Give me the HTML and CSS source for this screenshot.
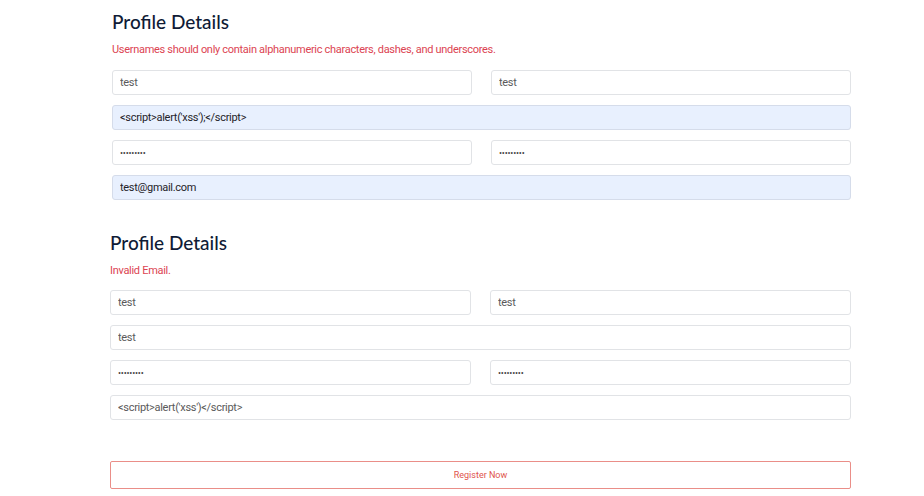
FILE: index.html
```html
<!DOCTYPE html>
<html lang="en">
<head>
<meta charset="utf-8">
<title>Register</title>
<link rel="stylesheet" href="styles.css">
</head>
<body>
<main class="page">
  <section class="card card-first">
    <h2 class="title">Profile Details</h2>
    <p class="error">Usernames should only contain alphanumeric characters, dashes, and underscores.</p>
    <div class="grid">
      <input class="field" type="text" value="test" readonly>
      <input class="field" type="text" value="test" readonly>
      <input class="field full filled" type="text" value="<script>alert('xss');</script>" readonly>
      <input class="field pass" type="text" value="•••••••••" readonly>
      <input class="field pass" type="text" value="•••••••••" readonly>
      <input class="field full filled" type="text" value="test@gmail.com" readonly>
    </div>
  </section>

  <section class="card card-second">
    <h2 class="title">Profile Details</h2>
    <p class="error">Invalid Email.</p>
    <div class="grid">
      <input class="field" type="text" value="test" readonly>
      <input class="field" type="text" value="test" readonly>
      <input class="field full" type="text" value="test" readonly>
      <input class="field pass" type="text" value="•••••••••" readonly>
      <input class="field pass" type="text" value="•••••••••" readonly>
      <input class="field full" type="text" value="<script>alert('xss')</script>" readonly>
    </div>
    <button class="register" type="button">Register Now</button>
  </section>
</main>
</body>
</html>
```

FILE: styles.css
```css
html, body {
  margin: 0;
  padding: 0;
  background: #ffffff;
}

body {
  font-family: Roboto, "Liberation Sans", Arial, sans-serif;
  color: #333;
}

.page {
  display: flex;
  flex-direction: column;
}

.card-first {
  margin-left: 112px;
  width: 739px;
  padding-top: 10px;
}

.card-second {
  margin-left: 110px;
  width: 741px;
  margin-top: 31px;
}

.title {
  margin: 0;
  font-family: Lato, "Noto Sans", sans-serif;
  font-weight: 500;
  font-size: 19px;
  line-height: 24px;
  color: #0f1b36;
}

.error {
  margin: 9px 0 13px;
  font-size: 11px;
  line-height: 14px;
  letter-spacing: -0.3px;
  color: #dc4452;
}

.card-second .error {
  margin-bottom: 12px;
}

.grid {
  display: grid;
  grid-template-columns: 1fr 1fr;
  column-gap: 19px;
  row-gap: 10px;
}

.full {
  grid-column: 1 / -1;
}

.field {
  box-sizing: border-box;
  width: 100%;
  height: 25px;
  margin: 0;
  padding: 0 7px;
  border: 1px solid #e1e3e6;
  border-radius: 3px;
  background: #ffffff;
  font-family: Roboto, "Liberation Sans", Arial, sans-serif;
  font-size: 11px;
  letter-spacing: -0.3px;
  color: #5a5a5a;
  outline: none;
}

.field.filled {
  background: #e8f0fe;
  border-color: #d5dcea;
  color: #1f2329;
}

.field.pass {
  font-size: 9px;
  letter-spacing: -0.2px;
  color: #444;
}

.register {
  box-sizing: border-box;
  width: 100%;
  height: 28px;
  margin-top: 41px;
  border: 1px solid #ea8e88;
  border-radius: 2px;
  background: #ffffff;
  color: #e0544c;
  font-family: Roboto, "Liberation Sans", Arial, sans-serif;
  font-size: 9px;
  cursor: pointer;
}
```
